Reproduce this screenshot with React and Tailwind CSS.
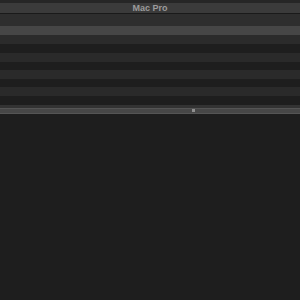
export default function App() {
  // alternating list rows under the header
  const rows = [
    { h: "h-[9px]", bg: "bg-[#464646]" },
    { h: "h-[9px]", bg: "bg-[#2b2b2b]" },
    { h: "h-[9px]", bg: "bg-[#1e1e1e]" },
    { h: "h-[9px]", bg: "bg-[#2a2a2a]" },
    { h: "h-[8px]", bg: "bg-[#1e1e1e]" },
    { h: "h-[9px]", bg: "bg-[#2a2a2a]" },
    { h: "h-[8px]", bg: "bg-[#1e1e1e]" },
    { h: "h-[9px]", bg: "bg-[#2a2a2a]" },
    { h: "h-[9px]", bg: "bg-[#1e1e1e]" },
  ];

  return (
    <div className="w-[300px] h-[300px] flex flex-col bg-[#1e1e1e] overflow-hidden font-['Liberation_Sans',sans-serif]">
      <div className="h-[3px] bg-[#262626]" />
      <div className="h-[10px] bg-[#3b3b3b] flex items-center justify-center">
        <span className="text-[9px] leading-none font-semibold text-[#9c9c9c]">Mac Pro</span>
      </div>
      <div className="h-[1px] bg-[#1a1a1a]" />
      <div className="h-[12px] bg-[#2e2e2e]" />
      {rows.map((r, i) => (
        <div key={i} className={`${r.h} ${r.bg}`} />
      ))}
      {/* splitter */}
      <div className="h-[3px] bg-[#333333]" />
      <div className="h-[6px] bg-[#474747] border-y border-[#555555] relative">
        <div className="absolute left-[192px] top-[0px] w-[3px] h-[3px] bg-[#8f8f8f]" />
      </div>
      <div className="flex-1 bg-[#1e1e1e]" />
    </div>
  );
}
